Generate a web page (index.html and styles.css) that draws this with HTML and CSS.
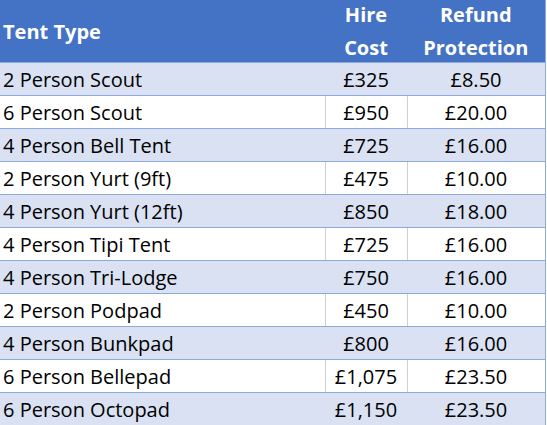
FILE: index.html
```html
<!DOCTYPE html>
<html>
<head>
<meta charset="utf-8">
<link rel="stylesheet" href="styles.css">
</head>
<body>
<table class="tents">
  <colgroup><col class="c1"><col class="c2"><col class="c3"></colgroup>
  <thead>
    <tr>
      <th class="left"><div class="hd">Tent Type</div></th>
      <th><div class="hd"><span>Hire</span><span>Cost</span></div></th>
      <th><div class="hd"><span>Refund</span><span>Protection</span></div></th>
    </tr>
  </thead>
  <tbody>
    <tr class="band"><td>2 Person Scout</td><td>£325</td><td>£8.50</td></tr>
    <tr><td>6 Person Scout</td><td>£950</td><td>£20.00</td></tr>
    <tr class="band"><td>4 Person Bell Tent</td><td>£725</td><td>£16.00</td></tr>
    <tr><td>2 Person Yurt (9ft)</td><td>£475</td><td>£10.00</td></tr>
    <tr class="band"><td>4 Person Yurt (12ft)</td><td>£850</td><td>£18.00</td></tr>
    <tr><td>4 Person Tipi Tent</td><td>£725</td><td>£16.00</td></tr>
    <tr class="band"><td>4 Person Tri-Lodge</td><td>£750</td><td>£16.00</td></tr>
    <tr><td>2 Person Podpad</td><td>£450</td><td>£10.00</td></tr>
    <tr class="band"><td>4 Person Bunkpad</td><td>£800</td><td>£16.00</td></tr>
    <tr><td>6 Person Bellepad</td><td>£1,075</td><td>£23.50</td></tr>
    <tr class="band"><td>6 Person Octopad</td><td>£1,150</td><td>£23.50</td></tr>
  </tbody>
</table>
</body>
</html>
```
FILE: styles.css
```css
html, body { margin: 0; padding: 0; background: #fff; }
.tents {
  border-collapse: collapse;
  table-layout: fixed;
  width: 545px;
  font-family: "Open Sans", Lato, sans-serif;
  font-size: 20px;
  color: #000;
}
.c1 { width: 325px; }
.c2 { width: 82px; }
.c3 { width: 138px; }
.tents th {
  background: #4472C4;
  color: #fff;
  font-weight: bold;
  padding: 0;
  text-align: center;
  vertical-align: middle;
  border-bottom: 1px solid #8EA9DB;
}
.hd {
  height: 62px;
  display: flex;
  flex-direction: column;
  justify-content: center;
  line-height: 33px;
}
.tents th.left { text-align: left; padding-left: 3px; }
.tents td {
  box-sizing: border-box;
  height: 33px;
  padding: 2px 0 0 0;
  line-height: 30px;
  text-align: center;
  vertical-align: middle;
  border-bottom: 1px solid #8EA9DB;
  border-left: 1px solid #D0D0D0;
}
.tents td:first-child { text-align: left; padding-left: 3px; border-left: none; }
.tents td:last-child, .tents th:last-child { border-right: 1px solid #8EA9DB; }
.tents tr.band td { background: #D9E1F2; border-left-color: #D9E1F2; }
```
